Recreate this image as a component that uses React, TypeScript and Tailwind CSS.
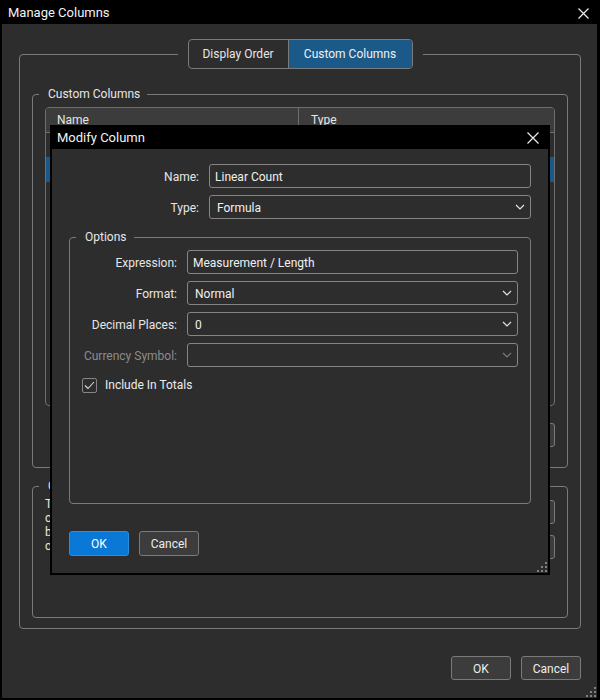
import React from "react";

function XIcon({ size = 11 }: { size?: number }) {
  return (
    <svg width={size} height={size} viewBox={`0 0 ${size} ${size}`}>
      <path d={`M0.5 0.5L${size - 0.5} ${size - 0.5}M${size - 0.5} 0.5L0.5 ${size - 0.5}`} stroke="#ececec" strokeWidth="1.2" fill="none" />
    </svg>
  );
}

function Chevron({ color = "#e0e0e0" }: { color?: string }) {
  return (
    <svg width="10" height="6" viewBox="0 0 10 6">
      <path d="M1 1L5 5L9 1" fill="none" stroke={color} strokeWidth="1.2" />
    </svg>
  );
}

function Grip() {
  return (
    <svg width="10" height="10" viewBox="0 0 10 10">
      <rect x="8" y="0" width="2" height="2" fill="#808080" />
      <rect x="4" y="4" width="2" height="2" fill="#808080" />
      <rect x="8" y="4" width="2" height="2" fill="#808080" />
      <rect x="0" y="8" width="2" height="2" fill="#808080" />
      <rect x="4" y="8" width="2" height="2" fill="#808080" />
      <rect x="8" y="8" width="2" height="2" fill="#808080" />
    </svg>
  );
}

function GroupBox({ label, className = "", children }: { label: string; className?: string; children?: React.ReactNode }) {
  return (
    <div className={`border border-[#7a7a7a] rounded-[4px] px-[12px] ${className}`}>
      <div className="-mt-[8px] -ml-[6px] pl-[9px] pr-[7px] w-fit bg-[#2d2d2d] leading-[15px] text-[12px] text-[#e6e6e6]">
        {label}
      </div>
      {children}
    </div>
  );
}

function TextInput({ value }: { value: string }) {
  return (
    <div className="flex-1 h-[24px] border border-[#858585] rounded-[3px] flex items-center pl-[5px] pt-[1px] text-[#f0f0f0]">
      {value}
    </div>
  );
}

function Select({ value, disabled = false }: { value: string; disabled?: boolean }) {
  return (
    <div className="flex-1 h-[24px] border border-[#858585] rounded-[3px] flex items-center pl-[7px] pr-[5px] text-[#f0f0f0]">
      <span className="flex-1 pt-[1px]">{value}</span>
      <Chevron color={disabled ? "#7a7a7a" : "#e4e4e4"} />
    </div>
  );
}

function GrayButton({ label, className = "" }: { label: string; className?: string }) {
  return (
    <div className={`w-[60px] h-[24px] bg-[#3c3c3c] border border-[#7a7a7a] rounded-[3px] flex items-center justify-center pt-[1px] text-[#ececec] ${className}`}>
      {label}
    </div>
  );
}

export default function App() {
  return (
    <div className="w-[600px] h-[700px] bg-black flex flex-col relative font-['Roboto',sans-serif] text-[12px] text-[#e6e6e6] overflow-hidden">
      {/* Title bar */}
      <div className="h-[24px] flex items-center justify-between pl-[8px] pr-[11px] pt-[2px] text-[13px] text-[#f2f2f2]">
        <span>Manage Columns</span>
        <XIcon size={11} />
      </div>

      {/* Body */}
      <div className="flex-1 ml-[2px] mr-[3px] mb-[2px] bg-[#2d2d2d] flex flex-col relative pl-[17px] pr-[16px] pt-[30px]">
        {/* Outer group with tabs */}
        <div className="flex-1 border border-[#7a7a7a] rounded-[4px] flex flex-col px-[12px] pb-[10px]">
          <div className="flex justify-center -mt-[16px]">
            <div className="flex px-[10px] bg-[#2d2d2d]">
              <div className="flex h-[30px] border border-[#7a7a7a] rounded-[4px] overflow-hidden">
                <div className="w-[100px] border-r border-[#7a7a7a] flex items-center justify-center text-[#e6e6e6]">
                  Display Order
                </div>
                <div className="w-[123px] bg-[#1b5a88] flex items-center justify-center text-[#f0f0f0]">
                  Custom Columns
                </div>
              </div>
            </div>
          </div>

          <GroupBox label="Custom Columns" className="mt-[25px] h-[374px] flex flex-col">
            <div className="mt-[5px] h-[299px] border border-[#6e6e6e] rounded-[4px] overflow-hidden flex flex-col">
              <div className="h-[25px] bg-[#3c3c3c] flex border-b border-[#6e6e6e]">
                <div className="w-[253px] border-r border-[#6e6e6e] pl-[11px] flex items-center">Name</div>
                <div className="flex-1 pl-[12px] flex items-center">Type</div>
              </div>
              <div className="h-[24px] flex">
                <div className="w-[253px] pl-[11px] flex items-center">Area Count</div>
                <div className="flex-1 pl-[12px] flex items-center">Formula</div>
              </div>
              <div className="h-[25px] flex bg-[#1b5a88]">
                <div className="w-[253px] pl-[11px] flex items-center">Linear Count</div>
                <div className="flex-1 pl-[12px] flex items-center">Formula</div>
              </div>
            </div>
            <div className="mt-[17px] flex justify-end gap-[10px]">
              <GrayButton label="Add..." className="w-[75px]" />
              <GrayButton label="Edit..." className="w-[75px]" />
              <GrayButton label="Delete" className="w-[75px]" />
            </div>
          </GroupBox>

          <GroupBox label="Column Information" className="mt-[18px] flex-1">
            <div className="flex gap-[12px]">
              <div className="flex-1 mt-[3px] leading-[14px] text-[#e6e6e6]">
                <div>The selected column is calculated from an</div>
                <div>custom expression that combines other columns</div>
                <div>based on measurements, counts and totals</div>
                <div>calculated for each row of the takeoff.</div>
              </div>
              <div className="mt-[6px] flex flex-col gap-[11px]">
                <GrayButton label="Import..." className="w-[75px]" />
                <GrayButton label="Export..." className="w-[75px]" />
              </div>
            </div>
          </GroupBox>
        </div>

        {/* Bottom buttons */}
        <div className="mt-[27px] mb-[18px] flex justify-end gap-[10px]">
          <GrayButton label="OK" />
          <GrayButton label="Cancel" />
        </div>

        <div className="absolute right-[1px] bottom-[1px]">
          <Grip />
        </div>
      </div>

      {/* Modify Column modal */}
      <div className="absolute left-[50px] top-[125px] w-[500px] h-[450px] bg-black flex flex-col">
        <div className="h-[24px] flex items-center justify-between pl-[7px] pr-[11px] pt-[1px] text-[13px] text-[#f2f2f2]">
          <span>Modify Column</span>
          <XIcon size={12} />
        </div>
        <div className="flex-1 mx-[2px] mb-[2px] bg-[#2d2d2d] relative px-[17px] pt-[15px] flex flex-col">
          <div className="flex items-center">
            <div className="w-[130px] text-right pt-[1px] text-[#e6e6e6]">Name:</div>
            <div className="ml-[10px] flex-1 flex">
              <TextInput value="Linear Count" />
            </div>
          </div>
          <div className="mt-[7px] flex items-center">
            <div className="w-[130px] text-right pt-[1px] text-[#e6e6e6]">Type:</div>
            <div className="ml-[10px] flex-1 flex">
              <Select value="Formula" />
            </div>
          </div>

          <GroupBox label="Options" className="mt-[18px] h-[267px] flex flex-col">
            <div className="mt-[5px] flex flex-col gap-[7px]">
              <div className="flex items-center">
                <div className="w-[95px] text-right pt-[1px]">Expression:</div>
                <div className="ml-[10px] flex-1 flex">
                  <TextInput value="Measurement / Length" />
                </div>
              </div>
              <div className="flex items-center">
                <div className="w-[95px] text-right pt-[1px]">Format:</div>
                <div className="ml-[10px] flex-1 flex">
                  <Select value="Normal" />
                </div>
              </div>
              <div className="flex items-center">
                <div className="w-[95px] text-right pt-[1px]">Decimal Places:</div>
                <div className="ml-[10px] flex-1 flex">
                  <Select value="0" />
                </div>
              </div>
              <div className="flex items-center">
                <div className="w-[95px] text-right pt-[1px] text-[#8c8c8c] whitespace-nowrap">Currency Symbol:</div>
                <div className="ml-[10px] flex-1 flex">
                  <Select value="" disabled />
                </div>
              </div>
            </div>
            <div className="mt-[9px] flex items-center">
              <div className="w-[15px] h-[15px] border border-[#858585] rounded-[2px] flex items-center justify-center">
                <svg width="11" height="9" viewBox="0 0 11 9">
                  <path d="M1 4.5L4 7.5L10 1" fill="none" stroke="#dcdcdc" strokeWidth="1.1" />
                </svg>
              </div>
              <span className="ml-[8px] text-[#ececec]">Include In Totals</span>
            </div>
          </GroupBox>

          <div className="mt-[27px] flex gap-[10px]">
            <div className="w-[60px] h-[25px] bg-[#0a78d6] border border-[#2a8ee0] rounded-[3px] flex items-center justify-center pt-[1px] text-white">
              OK
            </div>
            <div className="w-[60px] h-[25px] bg-[#3c3c3c] border border-[#7a7a7a] rounded-[3px] flex items-center justify-center pt-[1px] text-[#ececec]">
              Cancel
            </div>
          </div>

          <div className="absolute right-[1px] bottom-[1px]">
            <Grip />
          </div>
        </div>
      </div>
    </div>
  );
}
